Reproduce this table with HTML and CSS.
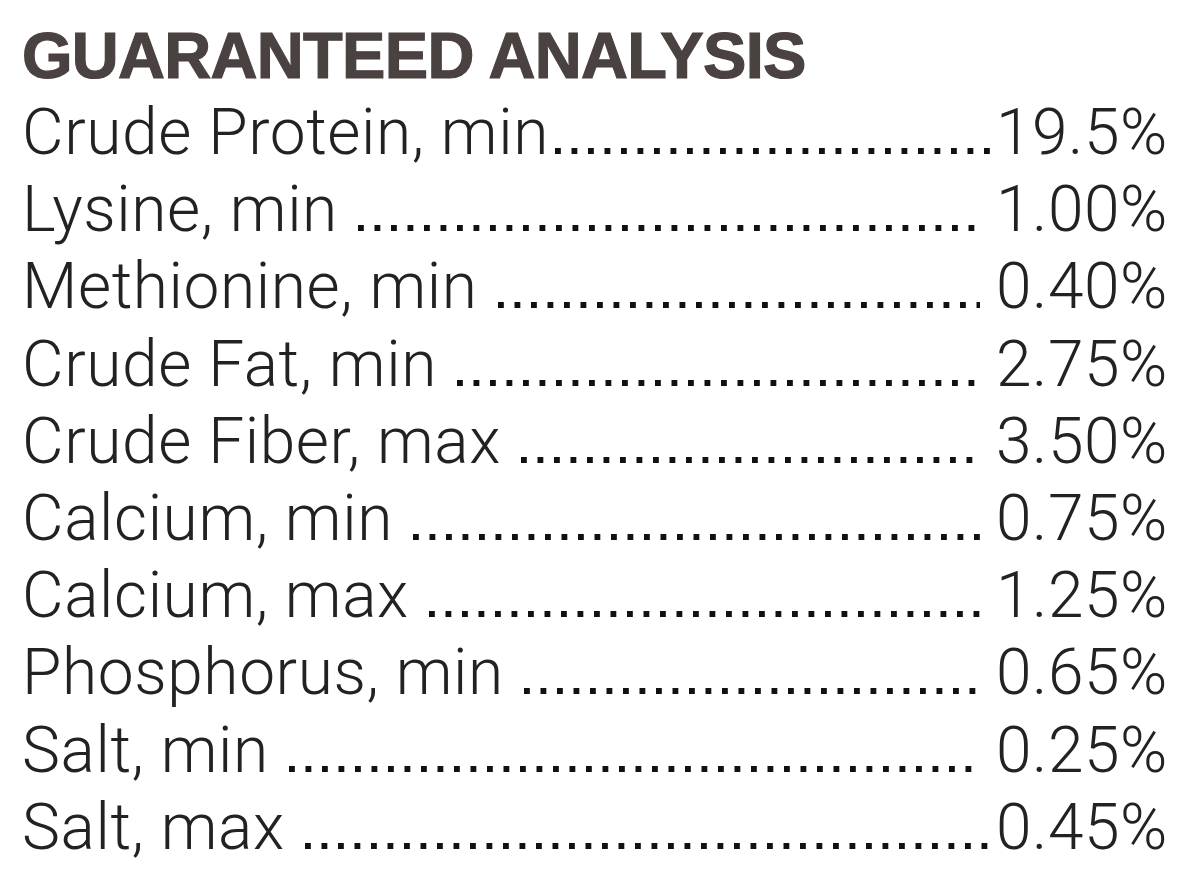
FILE: index.html
```html
<!doctype html>
<html>
  <head>
    <title>Guaranteed Analysis</title>
    <link rel="stylesheet" href="styles.css">
  </head>
  <body>
    <div class="panel">
      <h1 class="title">GUARANTEED ANALYSIS</h1>
      <ul class="rows">
        <li class="row"><span class="label">Crude Protein, min</span><span class="leader tight"></span><span class="value">19.5%</span></li>
        <li class="row"><span class="label">Lysine, min</span><span class="leader"></span><span class="value">1.00%</span></li>
        <li class="row"><span class="label">Methionine, min</span><span class="leader"></span><span class="value">0.40%</span></li>
        <li class="row"><span class="label">Crude Fat, min</span><span class="leader"></span><span class="value">2.75%</span></li>
        <li class="row"><span class="label">Crude Fiber, max</span><span class="leader"></span><span class="value">3.50%</span></li>
        <li class="row"><span class="label">Calcium, min</span><span class="leader"></span><span class="value">0.75%</span></li>
        <li class="row"><span class="label">Calcium, max</span><span class="leader"></span><span class="value">1.25%</span></li>
        <li class="row"><span class="label">Phosphorus, min</span><span class="leader"></span><span class="value">0.65%</span></li>
        <li class="row"><span class="label">Salt, min</span><span class="leader"></span><span class="value">0.25%</span></li>
        <li class="row"><span class="label">Salt, max</span><span class="leader flush"></span><span class="value">0.45%</span></li>
      </ul>
    </div>
  </body>
</html>
```

FILE: styles.css
```css
* {
  margin: 0;
  padding: 0;
  box-sizing: border-box;
}

body {
  background: #fff;
  color: #222;
  font-family: "Roboto", "Liberation Sans", sans-serif;
}

.panel {
  padding: 17px 32px 0 22px;
}

.title {
  font-family: "Liberation Sans", sans-serif;
  font-size: 65px;
  line-height: 77px;
  font-weight: bold;
  letter-spacing: -0.7px;
  color: #4a4141;
  -webkit-text-stroke: 1.2px #4a4141;
}

.rows {
  list-style: none;
}

.row {
  display: flex;
  align-items: baseline;
  font-size: 64px;
  font-weight: 300;
  line-height: 77.2px;
  letter-spacing: 0.6px;
}

.leader {
  flex: 1;
  height: 6px;
  margin: 0 16px 0 20px;
  background-image: linear-gradient(90deg, #111 6px, transparent 6px);
  background-size: 16.5px 6px;
  background-repeat: repeat-x;
}

.leader.tight {
  margin-left: 6px;
  margin-right: 4px;
}

.leader.flush {
  margin-right: 4px;
}

.value {
  white-space: nowrap;
}
```
